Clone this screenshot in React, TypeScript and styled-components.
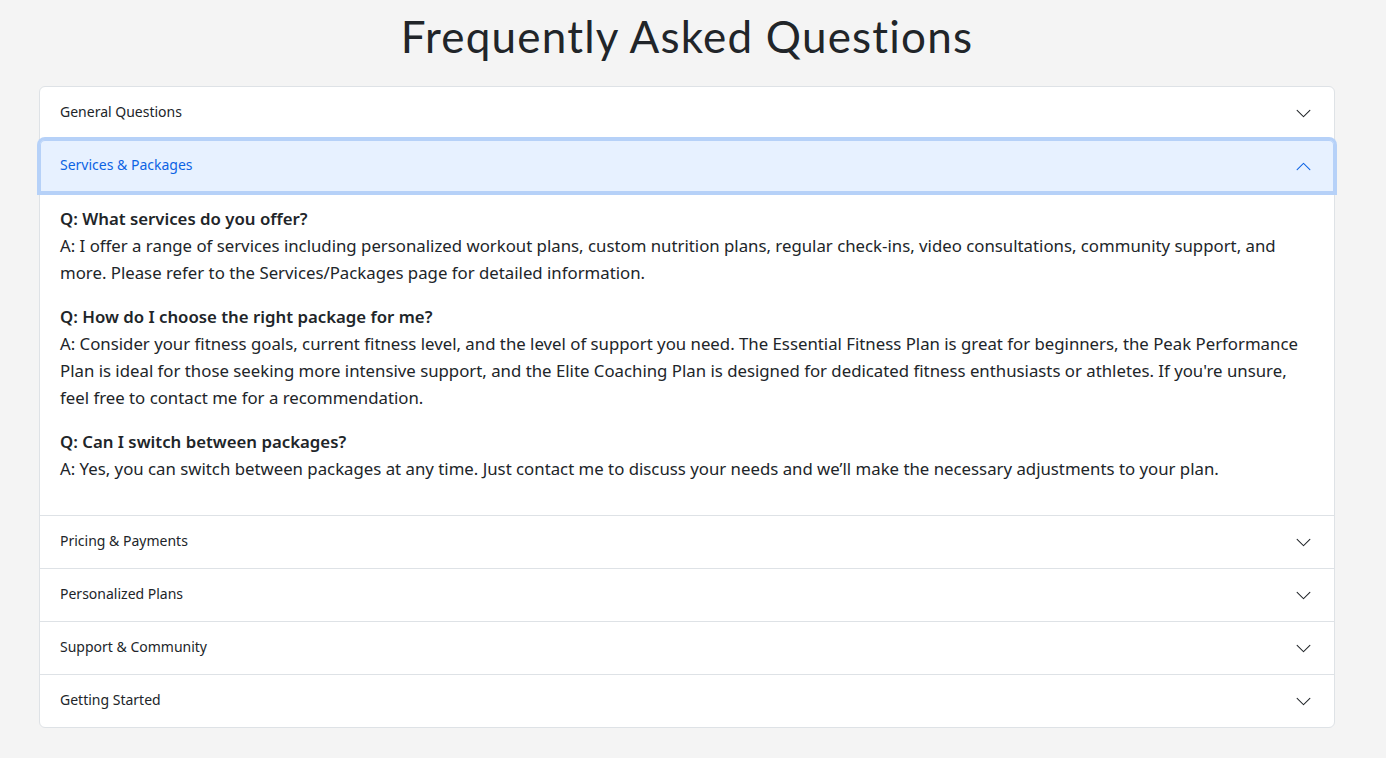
import { useState } from "react";
import styled, { createGlobalStyle } from "styled-components";

const GlobalStyle = createGlobalStyle`
  * { box-sizing: border-box; }
  body {
    margin: 0;
    background: #f4f4f4;
    color: #212529;
    font-family: "Noto Sans", "Open Sans", sans-serif;
  }
`;

interface FaqItem {
  q: string;
  a: string;
}

interface Section {
  title: string;
  items: FaqItem[];
}

const sections: Section[] = [
  { title: "General Questions", items: [] },
  {
    title: "Services & Packages",
    items: [
      {
        q: "Q: What services do you offer?",
        a: "A: I offer a range of services including personalized workout plans, custom nutrition plans, regular check-ins, video consultations, community support, and more. Please refer to the Services/Packages page for detailed information.",
      },
      {
        q: "Q: How do I choose the right package for me?",
        a: "A: Consider your fitness goals, current fitness level, and the level of support you need. The Essential Fitness Plan is great for beginners, the Peak Performance Plan is ideal for those seeking more intensive support, and the Elite Coaching Plan is designed for dedicated fitness enthusiasts or athletes. If you're unsure, feel free to contact me for a recommendation.",
      },
      {
        q: "Q: Can I switch between packages?",
        a: "A: Yes, you can switch between packages at any time. Just contact me to discuss your needs and we\u2019ll make the necessary adjustments to your plan.",
      },
    ],
  },
  { title: "Pricing & Payments", items: [] },
  { title: "Personalized Plans", items: [] },
  { title: "Support & Community", items: [] },
  { title: "Getting Started", items: [] },
];

const Page = styled.main`
  width: 1374px;
  padding: 0 39px 30px 39px;
`;

const Title = styled.h1`
  margin: 0;
  height: 86px;
  display: flex;
  align-items: center;
  justify-content: center;
  font-family: "Lato", "Open Sans", sans-serif;
  font-weight: 400;
  font-size: 44px;
  letter-spacing: 1.2px;
  color: #212529;
  padding-bottom: 14px;
`;

const Accordion = styled.div`
  background: #fff;
  border: 1px solid #dee2e6;
  border-radius: 6px;
`;

const Item = styled.div`
  & + & {
    border-top: 1px solid #dee2e6;
  }
`;

const Header = styled.button<{ $open: boolean }>`
  display: flex;
  width: 100%;
  height: 52px;
  align-items: center;
  justify-content: space-between;
  padding: 0 22px 3px 20px;
  border: 0;
  border-radius: 5px 5px 0 0;
  background: ${(p) => (p.$open ? "#e7f1ff" : "transparent")};
  color: ${(p) => (p.$open ? "#0c63e4" : "#212529")};
  box-shadow: ${(p) => (p.$open ? "0 0 0 3px #b6d1f8, inset 0 0 0 1px #b6d1f8" : "none")};
  position: relative;
  font-family: "Noto Sans", sans-serif;
  font-size: 14px;
  text-align: left;
  cursor: pointer;
`;

const Chevron = styled.svg<{ $open: boolean }>`
  width: 17px;
  height: 17px;
  margin-top: 3px;
  transform: ${(p) => (p.$open ? "rotate(180deg)" : "none")};
`;

const Body = styled.div`
  padding: 13px 20px 16px 20px;
`;

const Entry = styled.p`
  margin: 0 0 17px 0;
  font-size: 16.8px;
  line-height: 27px;
`;

const Question = styled.strong`
  display: block;
  font-weight: 600;
`;

const App = () => {
  const [open, setOpen] = useState(1);
  return (
    <>
      <GlobalStyle />
      <Page>
        <Title>Frequently Asked Questions</Title>
        <Accordion>
          {sections.map((s, i) => (
            <Item key={s.title}>
              <Header $open={open === i} onClick={() => setOpen(open === i ? -1 : i)}>
                {s.title}
                <Chevron $open={open === i} viewBox="0 0 16 16" fill={open === i ? "#0c63e4" : "#212529"}>
                  <path d="M1.646 4.646a.5.5 0 0 1 .708 0L8 10.293l5.646-5.647a.5.5 0 0 1 .708.708l-6 6a.5.5 0 0 1-.708 0l-6-6a.5.5 0 0 1 0-.708z" />
                </Chevron>
              </Header>
              {open === i && s.items.length > 0 && (
                <Body>
                  {s.items.map((it) => (
                    <Entry key={it.q}>
                      <Question>{it.q}</Question>
                      {it.a}
                    </Entry>
                  ))}
                </Body>
              )}
            </Item>
          ))}
        </Accordion>
      </Page>
    </>
  );
};

export default App;
